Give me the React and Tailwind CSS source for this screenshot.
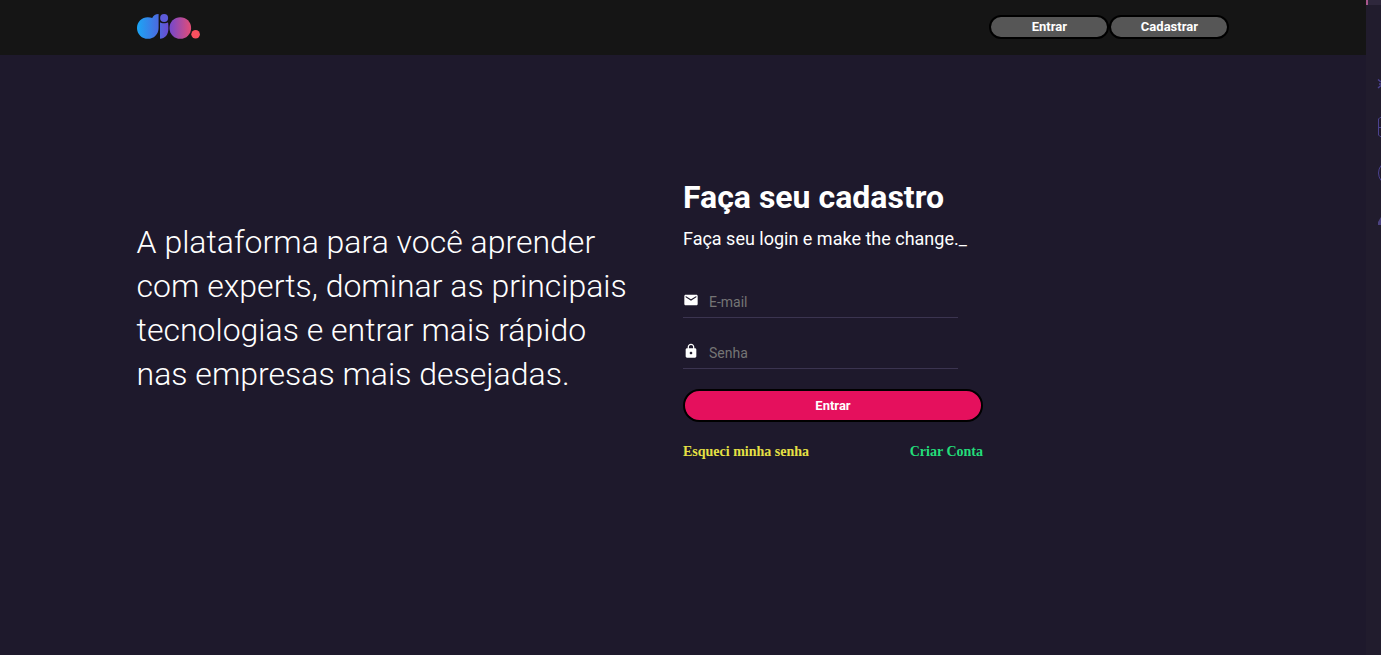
import { MdEmail, MdLock } from "react-icons/md";

function Logo() {
  return (
    <svg className="h-[27px] w-16" viewBox="0 0 64 27" role="img" aria-label="dio.">
      <defs>
        <linearGradient id="d-fill" gradientUnits="userSpaceOnUse" x1="0" y1="14" x2="32" y2="14">
          <stop offset="0" stopColor="#1aa6f5" />
          <stop offset="0.6" stopColor="#4670e2" />
          <stop offset="1" stopColor="#6e49cf" />
        </linearGradient>
        <linearGradient id="o-fill" gradientUnits="userSpaceOnUse" x1="32" y1="14" x2="55" y2="14">
          <stop offset="0" stopColor="#7048cf" />
          <stop offset="1" stopColor="#e84d72" />
        </linearGradient>
      </defs>
      <path
        fill="url(#d-fill)"
        d="M10.800 4.200C12.500 4.200 14 4.600 15.200 5.100C16.500 2.500 18.500 1 21.600 1V15A10.800 10.800 0 1 1 10.800 4.200Z"
      />
      <circle cx="27.100" cy="5" r="4" fill="#5c5bd9" />
      <path fill="url(#d-fill)" d="M23 9.200C24.500 10.600 29.500 10.600 31 9.200C31.400 11 31.400 13 31.400 15.500C31.400 21.500 28 25.800 23 25.800Z" />
      <circle cx="43.300" cy="15" r="10.800" fill="url(#o-fill)" />
      <circle cx="58.600" cy="21.300" r="4.300" fill="#f9505f" />
    </svg>
  );
}

function HeaderButton({ children }) {
  return (
    <button
      type="button"
      className="flex h-6 w-30 items-center justify-center rounded-full border-2 border-black bg-[#565656] text-[13px] font-bold text-white"
    >
      {children}
    </button>
  );
}

function Field({ id, label, type, icon: Icon }) {
  return (
    <div className="flex h-[31px] w-[275px] border-b border-[#3b3450]">
      <label htmlFor={id} aria-label={label} className="w-[26px] shrink-0 pt-[5px] text-white">
        <Icon size={16} />
      </label>
      <input
        id={id}
        type={type}
        placeholder={label}
        className="h-[30px] min-w-0 flex-1 bg-transparent text-sm text-white outline-none placeholder:text-[#757575]"
      />
    </div>
  );
}

function SideStrip() {
  return (
    <aside className="w-[15px] shrink-0 overflow-hidden bg-[#211c2d]" aria-hidden="true">
      <svg className="h-60 w-[15px]" viewBox="0 0 15 240" fill="none" stroke="#4b4290">
        <path d="M2 0H15V5H2Z" fill="#2e273c" stroke="none" />
        <path d="M0 0H2V5H0Z" fill="#a8568c" stroke="none" />
        <path strokeWidth="1.500" d="M12 79.500L15 82M12 88L15 85.500M13 84H15" />
        <path d="M15 117.500H14L12.500 119V135L14 136.500H15M13 127.500H15" />
        <path d="M15 165.500Q12.500 169 12.500 173T15 180.500" />
        <path d="M15 217L12 222V225H15Z" fill="#4b4280" stroke="none" />
      </svg>
    </aside>
  );
}

export default function App() {
  return (
    <div className="flex min-h-screen bg-[#1e192c] font-[Roboto,sans-serif] text-white">
      <div className="min-w-0 flex-1">
        <header className="bg-[#151515]">
          <div className="mx-auto flex h-[55px] w-4/5 items-center justify-between pb-0.5">
            <a href="#inicio">
              <Logo />
            </a>
            <nav className="flex">
              <HeaderButton>Entrar</HeaderButton>
              <HeaderButton>Cadastrar</HeaderButton>
            </nav>
          </div>
        </header>
        <main className="mx-auto grid w-4/5 grid-cols-2 pt-30">
          <p className="pt-[45px] pr-12 text-[32px] leading-[44px] font-light">
            A plataforma para você aprender com experts, dominar as principais tecnologias e entrar mais rápido nas
            empresas mais desejadas.
          </p>
          <section className="w-[300px]">
            <h1 className="text-[32px] leading-[44px] font-bold">Faça seu cadastro</h1>
            <p className="mt-2 text-lg leading-6 font-normal">Faça seu login e make the change._</p>
            <form className="mt-9">
              <Field id="email" label="E-mail" type="email" icon={MdEmail} />
              <div className="mt-5">
                <Field id="senha" label="Senha" type="password" icon={MdLock} />
              </div>
              <button
                type="button"
                className="mt-5 h-[33px] w-full rounded-full border-2 border-black bg-[#e5105d] text-[13px] font-bold"
              >
                Entrar
              </button>
            </form>
            <div className="mt-5 flex justify-between font-['Liberation_Serif',serif] text-sm leading-5 font-bold">
              <a href="#senha" className="text-[#e5e044]">
                Esqueci minha senha
              </a>
              <a href="#conta" className="text-[#23dd7a]">
                Criar Conta
              </a>
            </div>
          </section>
        </main>
      </div>
      <SideStrip />
    </div>
  );
}
